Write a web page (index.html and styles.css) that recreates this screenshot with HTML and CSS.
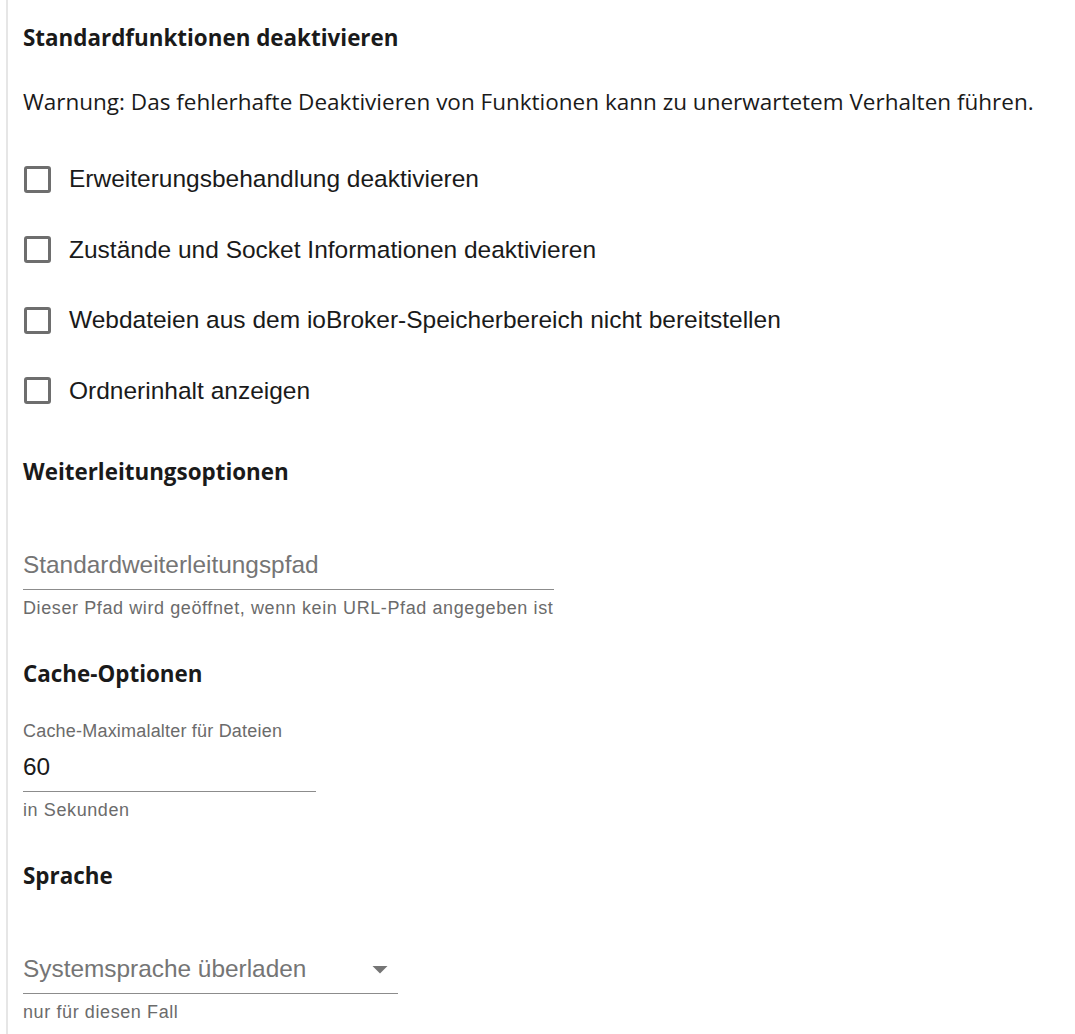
FILE: index.html
```html
<!DOCTYPE html>
<html lang="de">
<head>
    <meta charset="UTF-8">
    <title>Einstellungen</title>
    <link rel="stylesheet" href="styles.css">
</head>
<body>
    <div id="settings-panel">
        <h2 class="section-title">Standardfunktionen deaktivieren</h2>
        <p class="warning">Warnung: Das fehlerhafte Deaktivieren von Funktionen kann zu unerwartetem Verhalten führen.</p>

        <label class="check-row"><span class="check-box"></span>Erweiterungsbehandlung deaktivieren</label>
        <label class="check-row"><span class="check-box"></span>Zustände und Socket Informationen deaktivieren</label>
        <label class="check-row"><span class="check-box"></span>Webdateien aus dem ioBroker-Speicherbereich nicht bereitstellen</label>
        <label class="check-row"><span class="check-box"></span>Ordnerinhalt anzeigen</label>

        <h2 class="section-title title-redirect">Weiterleitungsoptionen</h2>
        <div class="field field-redirect">
            <div class="field-input placeholder">Standardweiterleitungspfad</div>
            <div class="helper">Dieser Pfad wird geöffnet, wenn kein URL-Pfad angegeben ist</div>
        </div>

        <h2 class="section-title title-cache">Cache-Optionen</h2>
        <div class="field field-cache">
            <div class="field-label">Cache-Maximalalter für Dateien</div>
            <div class="field-input">60</div>
            <div class="helper">in Sekunden</div>
        </div>

        <h2 class="section-title title-lang">Sprache</h2>
        <div class="field field-lang">
            <div class="field-input placeholder select">
                Systemsprache überladen
                <svg class="arrow" width="36" height="36" viewBox="0 0 24 24"><path d="M7 10l5 5 5-5z" fill="#757575"/></svg>
            </div>
            <div class="helper">nur für diesen Fall</div>
        </div>
    </div>
</body>
</html>
```

FILE: styles.css
```css
body {
    margin: 0;
    background: #fff;
    font-family: "Liberation Sans", Arial, sans-serif;
    color: rgba(0, 0, 0, 0.87);
}

#settings-panel {
    margin-left: 6px;
    border-left: 2px solid #e6e6e6;
    padding: 24px 0 0 15px;
    min-height: 1034px;
    box-sizing: border-box;
}

.section-title {
    font-family: "Open Sans", "Noto Sans", sans-serif;
    font-weight: 700;
    font-size: 22.4px;
    line-height: 28px;
    margin: 0;
    color: #1a1a1a;
}

.warning {
    font-family: "Open Sans", "Noto Sans", sans-serif;
    font-size: 22.5px;
    line-height: 28px;
    margin: 36px 0 28px;
    color: #1a1a1a;
}

.check-row {
    display: flex;
    align-items: center;
    gap: 18px;
    height: 70.5px;
    font-size: 24.5px;
    color: #1a1a1a;
}

.check-box {
    width: 21px;
    height: 21px;
    border: 3px solid #6e6e6e;
    border-radius: 3px;
    margin-left: 1px;
}

.title-redirect { margin-top: 32px; }
.title-cache { margin-top: 42px; }
.title-lang { margin-top: 42px; }

.field {
    display: flex;
    flex-direction: column;
}

.field-input {
    border-bottom: 1px solid #8c8c8c;
    font-size: 24.4px;
    line-height: 28px;
    padding: 7px 0 10px;
    color: #1a1a1a;
    position: relative;
}

.placeholder { color: #757575; }

.field-redirect { margin-top: 58px; width: 531px; }
.field-cache { margin-top: 33px; width: 293px; }
.field-lang { margin-top: 58px; width: 375px; }

.field-label {
    font-size: 18px;
    line-height: 20px;
    margin-bottom: 5px;
    letter-spacing: 0.2px;
    color: #6b6b6b;
}

.helper {
    font-size: 18px;
    line-height: 20px;
    margin-top: 8px;
    color: #6b6b6b;
    letter-spacing: 0.6px;
}

.select .arrow {
    position: absolute;
    right: 0;
    top: 3px;
}
```
